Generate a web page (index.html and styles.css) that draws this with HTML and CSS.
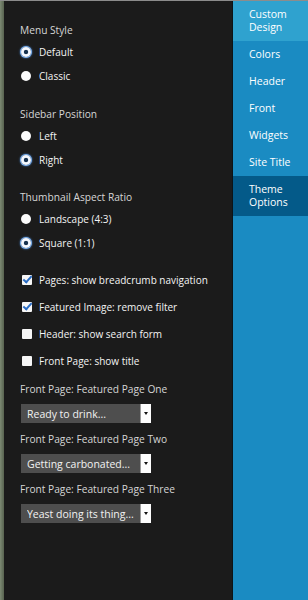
FILE: index.html
```html
<!DOCTYPE html>
<html lang="en">
<head>
  <meta charset="UTF-8" />
  <meta name="viewport" content="width=device-width, initial-scale=1.0"/>
  <title>Theme Options</title>
  <link rel="stylesheet" href="styles.css">
</head>
<body>
  <div class="frame">
    <div class="edge"></div>

    <div class="panel">
      <div class="group">
        <h3>Menu Style</h3>
        <label class="option"><input type="radio" name="menu" checked>Default</label>
        <label class="option"><input type="radio" name="menu">Classic</label>
      </div>

      <div class="group">
        <h3>Sidebar Position</h3>
        <label class="option"><input type="radio" name="sidebar">Left</label>
        <label class="option"><input type="radio" name="sidebar" checked>Right</label>
      </div>

      <div class="group">
        <h3>Thumbnail Aspect Ratio</h3>
        <label class="option"><input type="radio" name="thumb">Landscape (4:3)</label>
        <label class="option"><input type="radio" name="thumb" checked>Square (1:1)</label>
      </div>

      <div class="checks">
        <label class="check"><input type="checkbox" checked>Pages: show breadcrumb navigation</label>
        <label class="check"><input type="checkbox" checked>Featured Image: remove filter</label>
        <label class="check"><input type="checkbox">Header: show search form</label>
        <label class="check"><input type="checkbox">Front Page: show title</label>
      </div>

      <div class="field">
        <h3>Front Page: Featured Page One</h3>
        <div class="select">
          <select><option>Ready to drink...</option></select>
          <span class="arrow"></span>
        </div>
      </div>

      <div class="field">
        <h3>Front Page: Featured Page Two</h3>
        <div class="select">
          <select><option>Getting carbonated...</option></select>
          <span class="arrow"></span>
        </div>
      </div>

      <div class="field">
        <h3>Front Page: Featured Page Three</h3>
        <div class="select">
          <select><option>Yeast doing its thing...</option></select>
          <span class="arrow"></span>
        </div>
      </div>
    </div>

    <ul class="sidebar">
      <li class="light">Custom Design</li>
      <li>Colors</li>
      <li>Header</li>
      <li>Front</li>
      <li>Widgets</li>
      <li>Site Title</li>
      <li class="current">Theme Options</li>
    </ul>
  </div>
</body>
</html>
```

FILE: styles.css
```css
* {
  box-sizing: border-box;
}

html, body {
  margin: 0;
  height: 100%;
}

body {
  font-family: 'Open Sans', sans-serif;
  background-color: #1b1b1b;
  border-top: 1px solid #8c8c8c;
}

.frame {
  display: flex;
  height: 100%;
}

.edge {
  width: 4px;
  background-color: #6f7b66;
  background-image: linear-gradient(90deg, #7d8a73, #66725e 60%, #59634f);
}

.panel {
  flex: 1;
  background-color: #1b1b1b;
  border-right: 1px solid #0c1418;
  padding: 21px 0 0 16px;
}

h3 {
  margin: 0;
  font-size: 10.2px;
  font-weight: 400;
  line-height: 16px;
  color: #d6d6d6;
}

.group h3 {
  margin-bottom: 2px;
}

.group + .group {
  margin-top: 18px;
}

.group + .group + .group {
  margin-top: 17px;
}

.option,
.check {
  display: flex;
  align-items: center;
  font-size: 10px;
  color: #f4f4f4;
}

.option {
  height: 24px;
}

.check {
  height: 27px;
}

input[type="radio"] {
  appearance: none;
  width: 10px;
  height: 10px;
  margin: 0 8px 0 1px;
  border-radius: 50%;
  background: #fafafa;
}

input[type="radio"]:checked {
  background: radial-gradient(circle, #17324f 0 1.8px, #f4f8ff 2.6px);
  box-shadow: 0 0 0 1px #7fb0ea, 0 0 2px 1px #4d8fdc;
}

input[type="checkbox"] {
  appearance: none;
  position: relative;
  width: 10px;
  height: 10px;
  margin: 0 7px 0 2px;
  border-radius: 1px;
  background: #f6f6f6;
}

input[type="checkbox"]:checked::after {
  content: "";
  position: absolute;
  left: 1px;
  top: 1px;
  width: 7px;
  height: 3px;
  border-left: 2px solid #2a6cc4;
  border-bottom: 2px solid #2a6cc4;
  transform: rotate(-48deg);
}

.checks {
  margin-top: 11px;
  margin-bottom: 7px;
}

.field h3 {
  margin-bottom: 7px;
}

.field {
  margin-bottom: 8px;
}

.select {
  position: relative;
  width: 130px;
  height: 19px;
  margin-left: 1px;
}

.select select {
  display: block;
  appearance: none;
  width: 100%;
  height: 19px;
  margin: 0;
  border: 0;
  border-radius: 0;
  padding: 0 0 0 6px;
  background-color: #4e4e4e;
  color: #f2f2f2;
  font-family: 'Open Sans', sans-serif;
  font-size: 10.5px;
}

.arrow {
  position: absolute;
  right: 0;
  top: 0;
  width: 11px;
  height: 19px;
  background: #fdfdfd;
  border-left: 1px solid #9a9a9a;
}

.arrow::after {
  content: "";
  position: absolute;
  left: 3px;
  top: 8px;
  border-left: 2px solid transparent;
  border-right: 2px solid transparent;
  border-top: 3px solid #111;
}

.sidebar {
  list-style: none;
  margin: 0;
  padding: 0;
  width: 75px;
  background-color: #1a8bc2;
}

.sidebar li {
  padding: 7px 6px 7px 16px;
  font-size: 10.5px;
  line-height: 13px;
  color: #fff;
}

.sidebar li.light {
  background-color: #2fa2cf;
}

.sidebar li.current {
  background-color: #045a89;
}
```
